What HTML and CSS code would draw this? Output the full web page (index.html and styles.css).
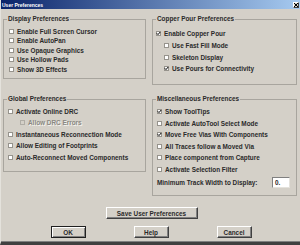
FILE: index.html
```html
<!DOCTYPE html>
<html lang="en">
<head>
  <meta charset="UTF-8" />
  <title>User Preferences</title>
  <link rel="stylesheet" href="styles.css">
</head>
<body>
  <div class="dialog">
    <div class="titlebar">
      <span class="title">User Preferences</span>
      <span class="close">
        <svg width="4" height="4" viewBox="0 0 4 4"><path d="M0 0 L4 4 M4 0 L0 4" stroke="#000" stroke-width="1"/></svg>
      </span>
    </div>

    <div class="panels">
      <fieldset class="group display">
        <legend>Display Preferences</legend>
        <div class="rows">
          <div class="opt"><span class="box"></span>Enable Full Screen Cursor</div>
          <div class="opt"><span class="box"></span>Enable AutoPan</div>
          <div class="opt"><span class="box"></span>Use Opaque Graphics</div>
          <div class="opt"><span class="box"></span>Use Hollow Pads</div>
          <div class="opt"><span class="box"></span>Show 3D Effects</div>
        </div>
      </fieldset>

      <fieldset class="group copper">
        <legend>Copper Pour Preferences</legend>
        <div class="rows">
          <div class="opt"><span class="box checked"><svg width="5" height="5" viewBox="0 0 5 5"><path d="M0.8 2.3 L2 3.6 L4.2 1" stroke="#000" stroke-width="1" fill="none"/></svg></span>Enable Copper Pour</div>
          <div class="opt sub"><span class="box"></span>Use Fast Fill Mode</div>
          <div class="opt sub"><span class="box"></span>Skeleton Display</div>
          <div class="opt sub"><span class="box checked"><svg width="5" height="5" viewBox="0 0 5 5"><path d="M0.8 2.3 L2 3.6 L4.2 1" stroke="#000" stroke-width="1" fill="none"/></svg></span>Use Pours for Connectivity</div>
        </div>
      </fieldset>

      <fieldset class="group global">
        <legend>Global Preferences</legend>
        <div class="rows">
          <div class="opt"><span class="box"></span>Activate Online DRC</div>
          <div class="opt sub disabled"><span class="box"></span>Allow DRC Errors</div>
          <div class="opt"><span class="box"></span>Instantaneous Reconnection Mode</div>
          <div class="opt"><span class="box"></span>Allow Editing of Footprints</div>
          <div class="opt"><span class="box"></span>Auto-Reconnect Moved Components</div>
        </div>
      </fieldset>

      <fieldset class="group misc">
        <legend>Miscellaneous Preferences</legend>
        <div class="rows">
          <div class="opt"><span class="box checked"><svg width="5" height="5" viewBox="0 0 5 5"><path d="M0.8 2.3 L2 3.6 L4.2 1" stroke="#000" stroke-width="1" fill="none"/></svg></span>Show ToolTips</div>
          <div class="opt"><span class="box"></span>Activate AutoTool Select Mode</div>
          <div class="opt"><span class="box checked"><svg width="5" height="5" viewBox="0 0 5 5"><path d="M0.8 2.3 L2 3.6 L4.2 1" stroke="#000" stroke-width="1" fill="none"/></svg></span>Move Free Vias With Components</div>
          <div class="opt"><span class="box"></span>All Traces follow a Moved Via</div>
          <div class="opt"><span class="box"></span>Place component from Capture</div>
          <div class="opt"><span class="box"></span>Activate Selection Filter</div>
          <div class="track">
            <span>Minimum Track Width to Display:</span>
            <span class="field">0.</span>
          </div>
        </div>
      </fieldset>
    </div>

    <div class="save-row">
      <button type="button" class="btn save">Save User Preferences</button>
    </div>

    <div class="actions">
      <button type="button" class="btn default">OK</button>
      <button type="button" class="btn">Help</button>
      <button type="button" class="btn">Cancel</button>
    </div>
  </div>
</body>
</html>
```

FILE: styles.css
```css
body {
  margin: 0;
  background-color: #d4d0c8;
  font-family: "Liberation Sans", Arial, sans-serif;
  font-weight: bold;
  font-size: 6.4px;
  color: #2a2a2a;
}

.dialog {
  width: 300px;
  height: 245px;
  box-sizing: border-box;
  border-left: 1px solid #e4e2dc;
  border-bottom: 3px solid #404040;
  box-shadow: inset 0 -1px #808080;
}

.titlebar {
  height: 9px;
  display: flex;
  justify-content: space-between;
  align-items: center;
  padding: 0 1px 0 1px;
  background: linear-gradient(90deg, #0a246a, #a6caf0);
  color: white;
  font-size: 5px;
}

.close {
  width: 6px;
  height: 6px;
  box-sizing: border-box;
  display: flex;
  justify-content: center;
  align-items: center;
  background-color: #d4d0c8;
  border: 1px solid;
  border-color: #fff #404040 #404040 #fff;
}

.panels {
  display: grid;
  grid-template-columns: 143px 145px;
  column-gap: 6px;
  row-gap: 10px;
  align-items: start;
  padding: 6px 0 0 2px;
}

.group {
  margin: 0;
  padding: 0;
  min-width: 0;
  border: 1px solid #a8a59e;
  box-sizing: border-box;
}

.group legend {
  margin-left: 3px;
  padding: 0 1px;
  line-height: 8px;
}

.rows {
  display: flex;
  flex-direction: column;
}

.display { height: 64px; }
.display .rows { padding: 4px 0 0 5px; gap: 1.6px; }

.copper { height: 70px; }
.copper .rows { padding: 6.3px 0 0 3px; gap: 3.9px; }

.global { height: 77px; }
.global .rows { padding: 4px 0 0 4px; gap: 3.6px; }

.misc { height: 101px; }
.misc .rows { padding: 4.7px 0 0 4px; gap: 3.5px; }

.opt {
  height: 8px;
  display: flex;
  align-items: center;
  gap: 3px;
  white-space: nowrap;
}

.copper .sub { padding-left: 8px; }
.global .sub { padding-left: 12px; }

.box {
  width: 5px;
  height: 5px;
  box-sizing: border-box;
  flex-shrink: 0;
  background-color: white;
  border: 1px solid #96938c;
  display: flex;
}

.box svg {
  margin: -1px;
}

.disabled {
  color: #8a8882;
  text-shadow: 1px 1px #f4f3ef;
}

.disabled .box {
  background-color: #d4d0c8;
  border-color: #b0ada6;
}

.track {
  height: 11px;
  display: flex;
  align-items: center;
  justify-content: space-between;
  padding-right: 6px;
  white-space: nowrap;
}

.field {
  width: 18px;
  height: 11px;
  box-sizing: border-box;
  padding-left: 2px;
  line-height: 9px;
  background-color: white;
  border: 1px solid;
  border-color: #808080 #e4e2dc #e4e2dc #808080;
}

.save-row {
  display: flex;
  justify-content: center;
  margin-top: 11px;
  padding-left: 2px;
}

.actions {
  display: flex;
  justify-content: center;
  gap: 48px;
  margin-top: 7px;
  padding-left: 1px;
}

.btn {
  height: 12px;
  width: 35px;
  box-sizing: border-box;
  padding: 0;
  margin: 0;
  background-color: #d4d0c8;
  font: inherit;
  color: #2a2a2a;
  border: 1px solid;
  border-color: #fff #404040 #404040 #fff;
  box-shadow: inset -1px -1px #808080;
}

.save {
  width: 92px;
}

.default {
  border: 1px solid #202020;
  box-shadow: inset 1px 1px #fff, inset -1px -1px #808080;
}
```
